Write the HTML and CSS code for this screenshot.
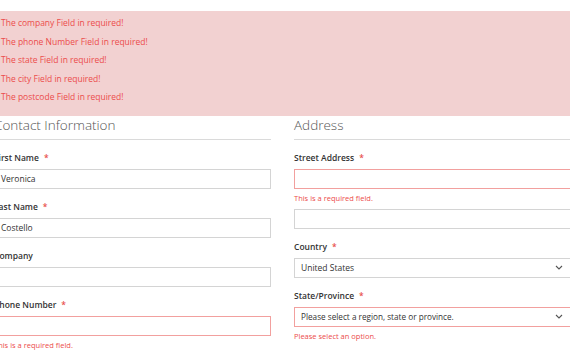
FILE: index.html
```html
<!DOCTYPE html>
<html lang="en">
<head>
    <meta charset="UTF-8">
    <title>Checkout - Shipping</title>
    <link rel="stylesheet" href="styles.css">
</head>
<body>
<div class="messages">
    <p>The company Field in required!</p>
    <p>The phone Number Field in required!</p>
    <p>The state Field in required!</p>
    <p>The city Field in required!</p>
    <p>The postcode Field in required!</p>
</div>

<div class="form">
    <div class="column">
        <h2 class="step-title">Contact Information</h2>
        <div class="field">
            <label class="required">First Name</label>
            <div class="input">Veronica</div>
        </div>
        <div class="field">
            <label class="required">Last Name</label>
            <div class="input">Costello</div>
        </div>
        <div class="field">
            <label>Company</label>
            <div class="input"></div>
        </div>
        <div class="field">
            <label class="required">Phone Number</label>
            <div class="input error"></div>
            <div class="field-error">This is a required field.</div>
        </div>
    </div>

    <div class="column">
        <h2 class="step-title">Address</h2>
        <div class="field">
            <label class="required">Street Address</label>
            <div class="input error"></div>
            <div class="field-error">This is a required field.</div>
            <div class="input line-two"></div>
        </div>
        <div class="field">
            <label class="required">Country</label>
            <div class="input select">
                <span>United States</span>
                <svg width="8" height="5" viewBox="0 0 8 5"><path d="M1 1l3 3 3-3" fill="none" stroke="#555" stroke-width="1.1"/></svg>
            </div>
        </div>
        <div class="field">
            <label class="required">State/Province</label>
            <div class="input select error">
                <span class="placeholder">Please select a region, state or province.</span>
                <svg width="8" height="5" viewBox="0 0 8 5"><path d="M1 1l3 3 3-3" fill="none" stroke="#555" stroke-width="1.1"/></svg>
            </div>
            <div class="field-error">Please select an option.</div>
        </div>
    </div>
</div>
</body>
</html>
```

FILE: styles.css
```css
body {
    margin: 0;
    font-family: "Open Sans", "Liberation Sans", sans-serif;
    color: #333;
    overflow: hidden;
}

.messages {
    margin-top: 11px;
    padding: 3px 0 9px 1px;
    background-color: #f2d1d1;
}

.messages p {
    margin: 0;
    font-size: 8.5px;
    line-height: 18.5px;
    color: #ec4c4b;
}

.form {
    display: grid;
    grid-template-columns: 277px 277px;
    column-gap: 23px;
    margin-left: -6px;
}

.step-title {
    margin: 0 0 12px 0;
    padding-bottom: 5px;
    border-bottom: 1px solid #dadada;
    font-size: 13.5px;
    line-height: 18px;
    font-weight: 300;
    color: #555;
}

.field {
    margin-bottom: 12px;
}

.field label {
    display: block;
    margin-bottom: 5px;
    font-size: 8.5px;
    line-height: 12px;
    font-weight: 600;
    color: #333;
}

.field label.required::after {
    content: "*";
    margin-left: 5px;
    color: #e8504d;
}

.input {
    box-sizing: border-box;
    height: 20px;
    padding: 0 6px;
    border: 1px solid #d4d4d4;
    font-size: 8.5px;
    line-height: 18px;
    color: #333;
}

.input.error {
    border-color: #f2a09e;
}

.input.line-two {
    margin-top: 6px;
}

.select {
    display: flex;
    align-items: center;
    justify-content: space-between;
    padding-right: 7px;
}

.select .placeholder {
    font-size: 8.2px;
}

.field-error {
    margin-top: 4px;
    font-size: 7.5px;
    line-height: 10px;
    color: #ec4c4b;
}
```
